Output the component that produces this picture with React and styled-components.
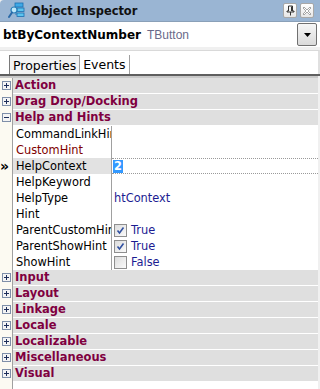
import React from "react";
import styled, { createGlobalStyle } from "styled-components";

const Global = createGlobalStyle`
  html, body { margin: 0; padding: 0; background: #f0f0f0; }
  body { font-family: "DejaVu Sans", Verdana, sans-serif; }
`;

const Window = styled.div`
  width: 320px;
  height: 389px;
  background: #f0f0f0;
  overflow: hidden;
  display: flex;
  flex-direction: column;
`;

const TitleBar = styled.div`
  height: 22px;
  flex: none;
  box-sizing: border-box;
  background: #9ab5d3;
  border-top-left-radius: 4px;
  border-bottom: 1px solid #8aa0b8;
  display: flex;
  align-items: center;
  padding: 0 6px 0 8px;
  gap: 6px;
`;

const Title = styled.span`
  flex: 1;
  font: bold 11.4px "DejaVu Sans", Verdana, sans-serif;
  color: #111;
`;

const TitleButton = styled.div`
  width: 12px;
  height: 13px;
  border: 1px solid #a8a8a8;
  border-radius: 2px;
  background: linear-gradient(#ffffff, #e6e6e6);
  display: flex;
  align-items: center;
  justify-content: center;
  margin-left: -3px;
`;

const SelectorRow = styled.div`
  height: 25px;
  flex: none;
  background: #fff;
  display: flex;
  align-items: center;
  padding-left: 3px;
  padding-right: 3px;
`;

const CompName = styled.span`
  font: bold 12px "DejaVu Sans", Verdana, sans-serif;
  color: #000;
`;

const CompType = styled.span`
  font: 12px "Liberation Sans", Arial, sans-serif;
  color: #6a6a8a;
  margin-left: 6px;
  flex: 1;
`;

const DropButton = styled.div`
  width: 18px;
  height: 21px;
  border: 1px solid #707070;
  border-radius: 2px;
  background: linear-gradient(#f6f6f6, #dadada);
  display: flex;
  align-items: center;
  justify-content: center;
`;

const TabArea = styled.div`
  height: 29px;
  flex: none;
  background: #f0f0f0;
  padding-top: 3px;
  box-sizing: border-box;
  border-bottom: 2px solid #5f5f5f;
`;

const TabStrip = styled.div`
  height: 24px;
  box-sizing: border-box;
  background: #fff;
  border-top: 1px solid #d9d9d9;
  border-right: 2px solid #e0e0e0;
  display: flex;
  align-items: flex-end;
  padding-left: 9px;
`;

const Tab = styled.div`
  height: 19px;
  box-sizing: border-box;
  padding: 0 3px 0 3px;
  font: 12.5px "DejaVu Sans", Verdana, sans-serif;
  color: #000;
  display: flex;
  align-items: center;
  border-right: 1px solid #a0a0a0;
  ${(p) =>
    p.$active &&
    `
    border-left: 1px solid #7a7a7a;
    border-top: 1px solid #7a7a7a;
    background: #f4f4f4;
  `}
`;

const UnderTab = styled.div`
  height: 2px;
  flex: none;
  background: #c8c8c8;
  width: 318px;
`;

const Grid = styled.div`
  flex: 1;
  width: 318px;
  background: #fff;
  display: flex;
  flex-direction: column;
`;

const Row = styled.div`
  height: 16px;
  flex: none;
  display: flex;
  box-sizing: border-box;
`;

const Gutter = styled.div`
  width: 12px;
  flex: none;
  background: #fcfaf2;
  border-right: 1px solid #a0a0a0;
  display: flex;
  align-items: center;
  justify-content: center;
  padding-bottom: 1px;
  box-sizing: content-box;
`;

const CategoryCell = styled.div`
  flex: 1;
  background: #dfdfdf;
  border-bottom: 1px solid #fff;
  font: bold 11.5px "DejaVu Sans", Verdana, sans-serif;
  color: #7f003f;
  padding-left: 2px;
  line-height: 15px;
  white-space: nowrap;
`;

const NameCell = styled.div`
  width: 95px;
  flex: none;
  padding-left: 3px;
  border-right: 1px solid #a0a0a0;
  font: 11.4px "DejaVu Sans", Verdana, sans-serif;
  line-height: 16px;
  color: ${(p) => (p.$modified ? "#800000" : "#000")};
  background: ${(p) => (p.$selected ? "#e2e2e2" : "#fff")};
  white-space: nowrap;
  overflow: hidden;
`;

const ValueCell = styled.div`
  flex: 1;
  display: flex;
  align-items: center;
  gap: 4px;
  padding-left: 2px;
  font: 11.4px "DejaVu Sans", Verdana, sans-serif;
  color: #1c1c92;
  white-space: nowrap;
  box-sizing: border-box;
  ${(p) =>
    p.$editing &&
    `
    border-top: 1px dotted #9a9a9a;
    border-bottom: 1px dotted #9a9a9a;
    padding-left: 1px;
  `}
`;

const Selected = styled.span`
  background: #3399ff;
  color: #fff;
  font-weight: bold;
  line-height: 13px;
  padding: 0 1px;
`;

const Check = styled.div`
  width: 11px;
  height: 11px;
  border: 1px solid #8e8e8e;
  background: linear-gradient(135deg, #dcdcdc, #fafafa);
  display: flex;
  align-items: center;
  justify-content: center;
`;

const Fill = styled.div`
  flex: 1;
  display: flex;
`;

const Marker = styled.span`
  font: bold 14px "DejaVu Sans", sans-serif;
  color: #000;
  line-height: 12px;
  margin-left: -3px;
`;

const ExpandBox = ({ open }) => (
  <svg width="9" height="9" viewBox="0 0 9 9">
    <rect x="0.5" y="0.5" width="8" height="8" fill="#f4f4f4" stroke="#7f8fa9" />
    <line x1="2" y1="4.5" x2="7" y2="4.5" stroke="#1e2e5a" />
    {!open && <line x1="4.5" y1="2" x2="4.5" y2="7" stroke="#1e2e5a" />}
  </svg>
);

const CheckMark = () => (
  <svg width="9" height="9" viewBox="0 0 9 9">
    <path d="M1.5 4.5 L3.5 7 L7.5 1.5" fill="none" stroke="#3050a0" strokeWidth="1.6" />
  </svg>
);

const InspectorIcon = () => (
  <svg width="17" height="17" viewBox="0 0 17 17">
    <rect x="7" y="1" width="8" height="4" fill="#3fa9e6" stroke="#1c6fb0" strokeWidth="0.8" />
    <rect x="9" y="6" width="7" height="3.5" fill="#5cc4ef" stroke="#1c6fb0" strokeWidth="0.8" />
    <rect x="9" y="11" width="7" height="3.5" fill="#5cc4ef" stroke="#1c6fb0" strokeWidth="0.8" />
    <line x1="8" y1="5" x2="8" y2="13" stroke="#1c6fb0" strokeWidth="0.8" />
    <circle cx="6" cy="8" r="3" fill="#bfe8fa" stroke="#2a7fb8" strokeWidth="1.2" />
    <line x1="4" y1="10.5" x2="1" y2="15" stroke="#2a6aa8" strokeWidth="2" strokeLinecap="round" />
  </svg>
);

const PinIcon = () => (
  <svg width="9" height="11" viewBox="0 0 9 11">
    <path d="M2.5 1 H6.5 V6 H8 V7 H1 V6 H2.5 Z M4.5 7 V10.5" fill="none" stroke="#333" strokeWidth="1" />
    <line x1="5.5" y1="1.5" x2="5.5" y2="6" stroke="#333" />
  </svg>
);

const CloseIcon = () => (
  <svg width="10" height="10" viewBox="0 0 10 10">
    <path d="M1 2 L2 1 L5 4 L8 1 L9 2 L6 5 L9 8 L8 9 L5 6 L2 9 L1 8 L4 5 Z" fill="#fff" stroke="#909090" strokeWidth="0.8" />
  </svg>
);

const DownArrow = () => (
  <svg width="7" height="4" viewBox="0 0 7 4">
    <path d="M0 0 H7 L3.5 4 Z" fill="#000" />
  </svg>
);

const rows = [
  { cat: "Action" },
  { cat: "Drag Drop/Docking" },
  { cat: "Help and Hints", open: true },
  { name: "CommandLinkHint" },
  { name: "CustomHint", modified: true },
  { name: "HelpContext", selected: true, value: "2", editing: true },
  { name: "HelpKeyword" },
  { name: "HelpType", value: "htContext" },
  { name: "Hint" },
  { name: "ParentCustomHint", check: true, value: "True" },
  { name: "ParentShowHint", check: true, value: "True" },
  { name: "ShowHint", check: false, value: "False" },
  { cat: "Input" },
  { cat: "Layout" },
  { cat: "Linkage" },
  { cat: "Locale" },
  { cat: "Localizable" },
  { cat: "Miscellaneous" },
  { cat: "Visual" },
];

export default function App() {
  return (
    <>
      <Global />
      <Window>
        <TitleBar>
          <InspectorIcon />
          <Title>Object Inspector</Title>
          <TitleButton><PinIcon /></TitleButton>
          <TitleButton><CloseIcon /></TitleButton>
        </TitleBar>
        <SelectorRow>
          <CompName>btByContextNumber</CompName>
          <CompType>TButton</CompType>
          <DropButton><DownArrow /></DropButton>
        </SelectorRow>
        <TabArea>
          <TabStrip>
            <Tab $active>Properties</Tab>
            <Tab>Events</Tab>
          </TabStrip>
        </TabArea>
        <UnderTab />
        <Grid>
          {rows.map((r, i) =>
            r.cat ? (
              <Row key={i}>
                <Gutter><ExpandBox open={r.open} /></Gutter>
                <CategoryCell>{r.cat}</CategoryCell>
              </Row>
            ) : (
              <Row key={i}>
                <Gutter>{r.selected && <Marker>»</Marker>}</Gutter>
                <NameCell $modified={r.modified} $selected={r.selected}>{r.name}</NameCell>
                <ValueCell $editing={r.editing}>
                  {r.check !== undefined && (
                    <Check>{r.check && <CheckMark />}</Check>
                  )}
                  {r.editing ? <Selected>{r.value}</Selected> : r.value}
                </ValueCell>
              </Row>
            )
          )}
          <Row as={Fill}>
            <Gutter />
          </Row>
        </Grid>
      </Window>
    </>
  );
}
